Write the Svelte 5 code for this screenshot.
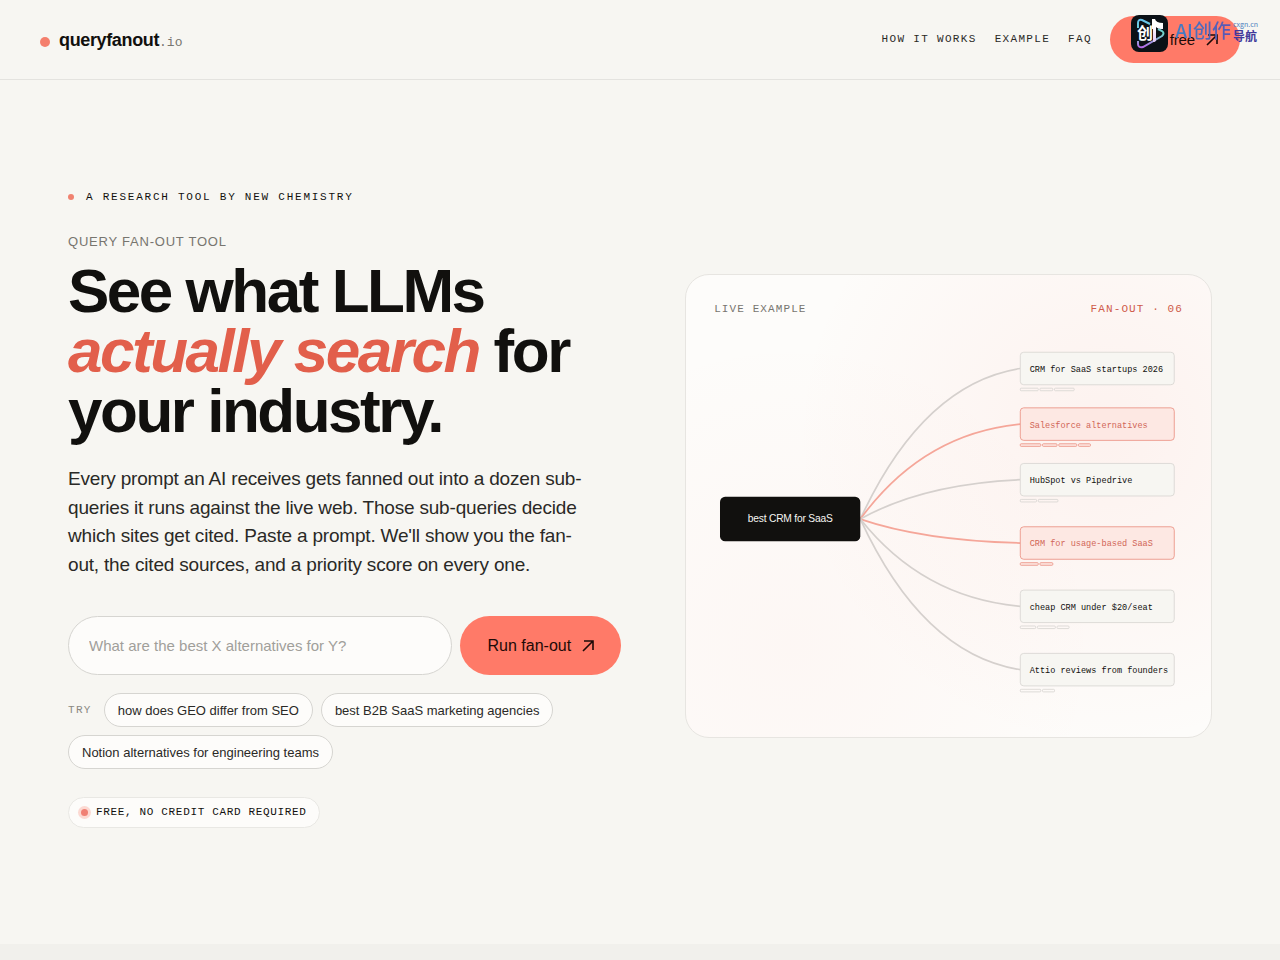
<script>
  let prompt = '';

  const links = [
    { label: 'How it works', href: '#how' },
    { label: 'Example', href: '#example' },
    { label: 'FAQ', href: '#faq' }
  ];

  const suggestions = [
    'how does GEO differ from SEO',
    'best B2B SaaS marketing agencies',
    'Notion alternatives for engineering teams'
  ];

  const root = { x: 171, y: 221 };

  const queries = [
    { text: 'CRM for SaaS startups 2026', y: 26, sources: [21, 15, 23] },
    { text: 'Salesforce alternatives', y: 91, hot: true, sources: [24, 17, 21, 14] },
    { text: 'HubSpot vs Pipedrive', y: 156, sources: [19, 23] },
    { text: 'CRM for usage-based SaaS', y: 230, hot: true, sources: [21, 15] },
    { text: 'cheap CRM under $20/seat', y: 304, sources: [18, 21, 14] },
    { text: 'Attio reviews from founders', y: 378, sources: [24, 14] }
  ];

  function curve(y) {
    const end = y + 19;
    const bend = Math.round(end + (root.y - end) * 0.1);
    return `M${root.x} ${root.y} Q244 ${bend} 358 ${end}`;
  }

  function sourceX(sources, i) {
    return sources.slice(0, i).reduce((x, w) => x + w + 2, 358);
  }
</script>

<header>
  <a class="brand" href="/">
    <span class="dot"></span>
    <span class="name">queryfanout<span class="tld">.io</span></span>
  </a>
  <nav>
    {#each links as link}
      <a href={link.href}>{link.label}</a>
    {/each}
    <button class="cta small">
      Try it free
      <svg width="14" height="14" viewBox="0 0 14 14"><path d="M2 12 12 2M3 2h9v9" /></svg>
    </button>
  </nav>
  <div class="badge">
    <svg width="37" height="37" viewBox="0 0 37 37">
      <defs>
        <linearGradient id="play" x1="0" y1="0" x2="0" y2="1">
          <stop offset="0" stop-color="#67c3ee" />
          <stop offset="0.5" stop-color="#6fd6c8" />
          <stop offset="1" stop-color="#b66be8" />
        </linearGradient>
        <linearGradient id="note" x1="0" y1="0" x2="0" y2="1">
          <stop offset="0.3" stop-color="#fff" />
          <stop offset="1" stop-color="#e3c8f8" />
        </linearGradient>
      </defs>
      <rect width="37" height="37" rx="8" fill="#0b1116" />
      <path d="M7 13V8q0-4 4-3l8 4M27 14l4 2q3 2 0 5L12 32q-5 1-5-3v-3" fill="none" stroke="url(#play)" stroke-width="2" />
      <text x="6" y="24" font-size="16" font-weight="700" fill="#fff">创</text>
      <path d="M21 4h3q1 4 8 4v6q-5 0-7-2v13q0 2-3 2V14h-1z" fill="url(#note)" />
    </svg>
    <span class="badge-title">AI创作</span>
    <span class="badge-side"><small>cxgn.cn</small><b>导航</b></span>
  </div>
</header>

<main>
  <section class="intro">
    <p class="eyebrow"><span></span>A research tool by New Chemistry</p>
    <p class="kicker">QUERY FAN-OUT TOOL</p>
    <h1>See what LLMs <em>actually search</em> for your industry.</h1>
    <p class="lead">
      Every prompt an AI receives gets fanned out into a dozen sub-queries it runs against the live
      web. Those sub-queries decide which sites get cited. Paste a prompt. We'll show you the
      fan-out, the cited sources, and a priority score on every one.
    </p>
    <form on:submit|preventDefault>
      <input
        type="text"
        aria-label="Prompt"
        placeholder="What are the best X alternatives for Y?"
        bind:value={prompt}
      />
      <button class="cta">
        Run fan-out
        <svg width="14" height="14" viewBox="0 0 14 14"><path d="M2 12 12 2M3 2h9v9" /></svg>
      </button>
    </form>
    <div class="try">
      <span>Try</span>
      {#each suggestions as text}
        <button on:click={() => (prompt = text)}>{text}</button>
      {/each}
    </div>
    <p class="free"><span></span>Free, no credit card required</p>
  </section>

  <section class="card">
    <div class="card-head">
      <span>Live example</span>
      <span class="count">Fan-out · 06</span>
    </div>
    <svg class="graph" viewBox="0 0 548 442">
      {#each queries as q}
        <path class="edge" class:hot={q.hot} d={curve(q.y)} />
      {/each}
      <rect x="7" y="195" width="164" height="52" rx="6" fill="#11100e" />
      <text class="root" x="89" y="225">best CRM for SaaS</text>
      {#each queries as q}
        <g class="node" class:hot={q.hot}>
          <rect x="358" y={q.y} width="180" height="38" rx="4" />
          <text x="369" y={q.y + 23}>{q.text}</text>
          {#each q.sources as w, i}
            <rect class="source" x={sourceX(q.sources, i)} y={q.y + 42} width={w} height="3" rx="1" />
          {/each}
        </g>
      {/each}
    </svg>
  </section>
</main>

<div class="next"></div>

<style>
  :global(body) {
    margin: 0;
    background: #f7f6f2;
    color: #11100e;
    font-family: 'Liberation Sans', Arial, sans-serif;
  }
  a {
    color: inherit;
    text-decoration: none;
  }
  p,
  h1 {
    margin: 0;
  }
  button,
  input {
    font-family: inherit;
    color: inherit;
  }
  button {
    cursor: pointer;
  }

  header {
    position: relative;
    display: flex;
    align-items: center;
    justify-content: space-between;
    padding: 16px 40px;
    border-bottom: 1px solid #e4e3df;
  }
  .brand {
    display: flex;
    align-items: center;
    gap: 9px;
    padding-top: 2px;
    font-size: 18px;
    font-weight: 700;
    letter-spacing: -0.02em;
  }
  .dot {
    width: 10px;
    height: 10px;
    margin-top: 2px;
    border-radius: 50%;
    background: #f47f6d;
  }
  .tld {
    font: 13px 'Liberation Mono', monospace;
    letter-spacing: 0;
    color: #77756f;
  }
  nav {
    display: flex;
    align-items: center;
    gap: 18px;
  }
  nav a {
    padding-bottom: 2px;
    font: 11px 'Liberation Mono', monospace;
    letter-spacing: 0.12em;
    text-transform: uppercase;
    color: #2a2926;
  }
  .cta {
    display: flex;
    align-items: center;
    justify-content: center;
    gap: 10px;
    flex: none;
    padding: 0 26px 0 28px;
    border: 0;
    border-radius: 999px;
    background: #ff7a68;
    font-size: 16px;
    color: #1d0a07;
  }
  .cta.small {
    height: 47px;
    padding: 0 21px 0 24px;
    font-size: 15px;
    letter-spacing: -0.01em;
  }
  .cta svg {
    fill: none;
    stroke: currentColor;
    stroke-width: 1.6;
  }

  .badge {
    position: absolute;
    top: 15px;
    right: 22px;
    display: flex;
    align-items: flex-start;
    font-family: 'Noto Sans CJK SC', sans-serif;
    pointer-events: none;
  }
  .badge-title {
    margin-left: 7px;
    font-size: 19px;
    font-weight: 500;
    line-height: 30px;
    background: linear-gradient(90deg, #3f7fc4, #5a55b5);
    background-clip: text;
    color: transparent;
  }
  .badge-side {
    display: flex;
    flex-direction: column;
    margin: 5px 0 0 2px;
    color: #40389b;
  }
  .badge-side small {
    font-size: 7px;
    line-height: 9px;
    color: #4b7fc0;
  }
  .badge-side b {
    font-size: 12px;
    line-height: 13px;
  }

  main {
    display: grid;
    grid-template-columns: 1.05fr 1fr;
    align-items: center;
    gap: 64px;
    box-sizing: border-box;
    max-width: 1200px;
    margin: 0 auto;
    padding: 110px 28px 116px;
  }
  .eyebrow {
    display: flex;
    align-items: center;
    gap: 12px;
    font: 11px/14px 'Liberation Mono', monospace;
    letter-spacing: 0.16em;
    text-transform: uppercase;
  }
  .eyebrow span {
    width: 6px;
    height: 6px;
    border-radius: 50%;
    background: #f08270;
  }
  .kicker {
    margin-top: 28px;
    font-size: 13px;
    line-height: 20px;
    letter-spacing: 0.06em;
    color: #77756f;
  }
  h1 {
    margin-top: 9px;
    font-size: 62px;
    line-height: 60px;
    letter-spacing: -0.04em;
  }
  em {
    color: #e25f4b;
  }
  .lead {
    max-width: 520px;
    margin-top: 24px;
    font-size: 19px;
    line-height: 1.5;
    letter-spacing: -0.01em;
    color: #2a2926;
  }
  form {
    display: flex;
    gap: 8px;
    height: 59px;
    margin-top: 37px;
  }
  input {
    flex: 1;
    min-width: 0;
    box-sizing: border-box;
    padding: 0 20px;
    border: 1px solid #d6d5d1;
    border-radius: 999px;
    background: #fdfcfa;
    font-size: 15px;
  }
  input::placeholder {
    color: #a19f9a;
    opacity: 1;
  }
  .try {
    display: flex;
    flex-wrap: wrap;
    align-items: center;
    gap: 8px;
    margin-top: 18px;
  }
  .try span {
    margin-right: 4px;
    font: 11px 'Liberation Mono', monospace;
    letter-spacing: 0.12em;
    text-transform: uppercase;
    color: #8a8882;
  }
  .try button {
    height: 34px;
    padding: 0 13px;
    border: 1px solid #d6d5d1;
    border-radius: 999px;
    background: #fdfcfa;
    font-size: 13px;
    color: #2a2926;
  }
  .free {
    display: flex;
    align-items: center;
    gap: 8px;
    width: fit-content;
    margin-top: 28px;
    padding: 7px 12px 8px;
    border: 1px solid #e9e8e4;
    border-radius: 999px;
    background: #fdfcfa;
    font: 11px/14px 'Liberation Mono', monospace;
    letter-spacing: 0.06em;
    text-transform: uppercase;
  }
  .free span {
    width: 7px;
    height: 7px;
    border-radius: 50%;
    background: #f08074;
    box-shadow: 0 0 0 3px #fcd9d2;
  }

  .card {
    margin-bottom: 6px;
    padding: 28px;
    border: 1px solid #e7e5e1;
    border-radius: 24px;
    background:
      radial-gradient(circle at 80% 35%, rgba(255, 122, 104, 0.08), transparent 60%),
      radial-gradient(circle at 20% 80%, rgba(255, 122, 104, 0.04), transparent 55%),
      #fdfcfa;
  }
  .card-head {
    display: flex;
    justify-content: space-between;
    margin-bottom: 14px;
    font: 11px/13px 'Liberation Mono', monospace;
    letter-spacing: 0.1em;
    text-transform: uppercase;
    color: #77756f;
  }
  .count {
    color: #cf5b4a;
  }
  .graph {
    display: block;
    width: 100%;
  }
  .edge {
    fill: none;
    stroke: #d5d0cd;
    stroke-width: 2;
  }
  .edge.hot {
    stroke: #f5a699;
  }
  .root {
    font-size: 12px;
    letter-spacing: -0.02em;
    text-anchor: middle;
    fill: #f7f6f2;
  }
  .node rect {
    fill: #f7f6f2;
    stroke: #d8d6d2;
  }
  .node .source {
    fill: none;
  }
  .node text {
    font: 10px 'Liberation Mono', monospace;
    fill: #11100e;
  }
  .node.hot rect {
    fill: #fde8e3;
    stroke: #eb9385;
  }
  .node.hot text {
    fill: #d16657;
  }

  .next {
    height: 16px;
    background: #f1f0ec;
  }
</style>
